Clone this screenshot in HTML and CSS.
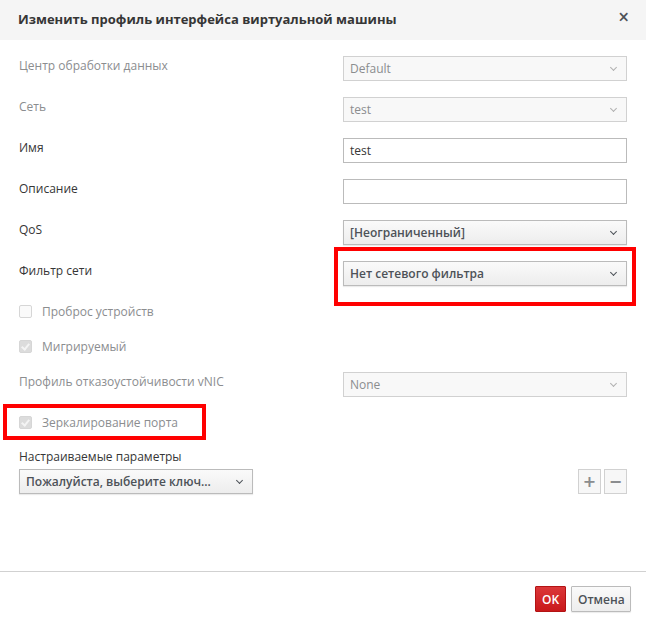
FILE: index.html
```html
<!DOCTYPE html>
<html lang="ru">
<head>
    <meta charset="UTF-8">
    <meta name="viewport" content="width=device-width, initial-scale=1.0">
    <title>Изменить профиль интерфейса виртуальной машины</title>
    <link rel="stylesheet" href="styles.css">
</head>
<body>
    <div class="dialog">
        <div class="dialog-header">
            <h4>Изменить профиль интерфейса виртуальной машины</h4>
            <span class="close">&times;</span>
        </div>

        <div class="dialog-body">
            <div class="row">
                <label class="muted">Центр обработки данных</label>
                <div class="select disabled"><span>Default</span><i class="caret"></i></div>
            </div>
            <div class="row">
                <label class="muted">Сеть</label>
                <div class="select disabled"><span>test</span><i class="caret"></i></div>
            </div>
            <div class="row">
                <label>Имя</label>
                <div class="text-input">test</div>
            </div>
            <div class="row">
                <label>Описание</label>
                <div class="text-input"></div>
            </div>
            <div class="row">
                <label>QoS</label>
                <div class="select"><span>[Неограниченный]</span><i class="caret"></i></div>
            </div>
            <div class="row">
                <label>Фильтр сети</label>
                <div class="select highlight"><span>Нет сетевого фильтра</span><i class="caret"></i></div>
            </div>

            <div class="check-row">
                <span class="checkbox"></span>
                <span class="muted">Проброс устройств</span>
            </div>
            <div class="check-row">
                <span class="checkbox checked"></span>
                <span class="muted">Мигрируемый</span>
            </div>
            <div class="row">
                <label class="muted">Профиль отказоустойчивости vNIC</label>
                <div class="select disabled"><span>None</span><i class="caret"></i></div>
            </div>
            <div class="check-row highlight-left">
                <span class="checkbox checked"></span>
                <span class="muted">Зеркалирование порта</span>
            </div>

            <div class="custom-props">
                <label>Настраиваемые параметры</label>
                <div class="custom-line">
                    <div class="select key-select"><span>Пожалуйста, выберите ключ...</span><i class="caret"></i></div>
                    <div class="plus-minus">
                        <button class="small-btn">+</button>
                        <button class="small-btn">&minus;</button>
                    </div>
                </div>
            </div>
        </div>

        <div class="dialog-footer">
            <button class="btn btn-primary">OK</button>
            <button class="btn btn-default">Отмена</button>
        </div>
    </div>
</body>
</html>
```

FILE: styles.css
```css
:root {
    --text: #363636;
    --muted: #8b8d8f;
    --border: #bbbbbb;
    --border-light: #d1d1d1;
    --mark: #ff0000;
}

*,
*::after {
    box-sizing: border-box;
}

body {
    margin: 0;
    font-family: 'Open Sans', 'Noto Sans', sans-serif;
    font-size: 12px;
    color: var(--text);
    background: #fff;
}

.dialog {
    width: 646px;
    height: 628px;
    display: flex;
    flex-direction: column;
}

.dialog-header {
    height: 40px;
    background: #f5f5f5;
    display: flex;
    align-items: center;
    justify-content: space-between;
    padding: 0 17px 0 18px;
}

.dialog-header h4 {
    margin: 0;
    font-size: 13px;
    font-weight: 700;
    position: relative;
    top: -1px;
}

.close {
    font-size: 19px;
    color: #4d5258;
    font-weight: 600;
    line-height: 1;
    position: relative;
    top: -3px;
}

.dialog-body {
    flex: 1;
    padding: 16px 19px 0 19px;
}

.row {
    display: grid;
    grid-template-columns: 324px 284px;
    align-items: center;
    height: 25px;
    margin-bottom: 16px;
}

.row label {
    position: relative;
    top: -3px;
}

.muted {
    color: var(--muted);
}

.select,
.text-input {
    height: 25px;
    border: 1px solid var(--border);
    display: flex;
    align-items: center;
    justify-content: space-between;
    padding: 0 10px 0 6px;
}

.text-input {
    background: #fff;
}

.select {
    background: linear-gradient(#fafafa, #ededed);
    box-shadow: 0 1px 1px rgba(3, 3, 3, 0.08);
    font-weight: 600;
    color: #4d5258;
}

.select.disabled {
    background: #f8f8f8;
    border-color: var(--border-light);
    box-shadow: none;
    font-weight: 400;
    color: var(--muted);
}

.caret {
    width: 5px;
    height: 5px;
    border-right: 1px solid #4d5258;
    border-bottom: 1px solid #4d5258;
    transform: rotate(45deg);
    margin-top: -3px;
}

.select.disabled .caret {
    border-color: #b0b0b0;
}

/* red annotation frames */
.highlight,
.highlight-left {
    position: relative;
}

.highlight::after {
    content: '';
    position: absolute;
    top: -15px;
    bottom: -21px;
    left: -10px;
    right: -10px;
    border: 4px solid var(--mark);
}

.highlight-left::after {
    content: '';
    position: absolute;
    top: -9px;
    bottom: -9px;
    left: -16px;
    width: 203px;
    border: 4px solid var(--mark);
}

.check-row {
    display: flex;
    align-items: center;
    gap: 10px;
    height: 18px;
    margin-top: 16px;
    margin-bottom: 17px;
}

.row + .check-row {
    margin-top: 0;
}

.check-row + .check-row {
    margin-top: 0;
}

.check-row + .row {
    margin-bottom: 16px;
}

.checkbox {
    width: 13px;
    height: 13px;
    border: 1px solid #d6d6d6;
    border-radius: 2px;
    background: #fafafa;
    position: relative;
}

.checkbox.checked {
    background: #dcdcdc;
    border-color: #d6d6d6;
}

.checkbox.checked::after {
    content: '';
    position: absolute;
    left: 3px;
    top: 1px;
    width: 5px;
    height: 8px;
    border-right: 2px solid #f4f4f4;
    border-bottom: 2px solid #f4f4f4;
    transform: rotate(40deg);
}

.custom-props {
    margin-top: 10px;
}

.custom-props label {
    display: block;
    margin-bottom: 4px;
}

.custom-line {
    display: flex;
    justify-content: space-between;
    align-items: center;
}

.key-select {
    width: 234px;
}

.plus-minus {
    display: flex;
    gap: 3px;
}

.small-btn {
    width: 23px;
    height: 25px;
    border: 1px solid var(--border-light);
    background: #f7f7f7;
    color: #8b8d8f;
    font-family: 'DejaVu Sans', sans-serif;
    font-size: 16px;
    font-weight: 700;
    padding: 0;
    line-height: 1;
}

.dialog-footer {
    height: 57px;
    border-top: 1px solid #d1d1d1;
    display: flex;
    justify-content: flex-end;
    align-items: flex-start;
    gap: 5px;
    padding: 14px 15px 0 0;
}

.btn {
    height: 26px;
    font-family: 'Open Sans', sans-serif;
    font-size: 12px;
    font-weight: 600;
    padding: 0 6px;
    border-radius: 1px;
}

.btn-primary {
    width: 31px;
    padding: 0;
    background: linear-gradient(#db3739, #c9191b);
    border: 1px solid #b31314;
    color: #fff;
}

.btn-default {
    width: 60px;
    background: linear-gradient(#fafafa, #ededed);
    border: 1px solid var(--border);
    color: #4d5258;
    box-shadow: 0 1px 1px rgba(3, 3, 3, 0.08);
}
```
